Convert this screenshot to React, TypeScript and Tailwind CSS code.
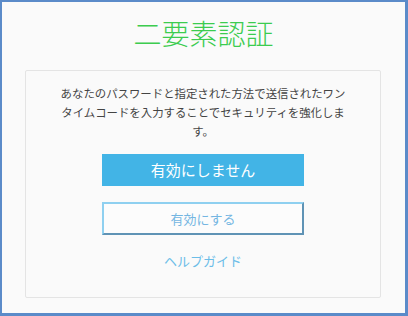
import React from 'react';

const font = { fontFamily: '"Noto Sans CJK JP", "Noto Sans", sans-serif' };

const App: React.FC = () => {
  return (
    <div
      className="w-[408px] h-[316px] bg-[#fafafa] border-l-2 border-t-2 border-r-[3px] border-b-[3px] border-[#5b8bc9] overflow-hidden"
      style={font}
    >
      <h1 className="pt-[11px] h-[53px] text-center text-[28px] leading-[40px] text-[#3ccc4f] font-light">
        二要素認証
      </h1>
      <div className="mt-[15px] ml-[23px] w-[356px] h-[228px] border border-[#e4e4e4] rounded-[2px] bg-[#fafafa] flex flex-col items-center">
        <p className="mt-[13px] w-[300px] text-center text-[11.4px] leading-[19px] text-[#444444]">
          あなたのパスワードと指定された方法で送信されたワン
          <br />
          タイムコードを入力することでセキュリティを強化しま
          <br />
          す。
        </p>
        <button
          type="button"
          className="mt-[13px] w-[202px] h-[32px] bg-[#42b4e6] text-white text-[15px] leading-[32px]"
        >
          有効にしません
        </button>
        <button
          type="button"
          className="mt-[16px] w-[202px] h-[33px] bg-[#fcfcfc] border-t-2 border-l-2 border-r-2 border-b-2 border-t-[#8fd0f0] border-l-[#8fd0f0] border-r-[#5f93b5] border-b-[#5f93b5] text-[#74b6e2] text-[13px]"
        >
          有効にする
        </button>
        <a href="#" className="mt-[16px] text-[13px] leading-[20px] text-[#6bbde8]">
          ヘルプガイド
        </a>
      </div>
    </div>
  );
};

export default App;
